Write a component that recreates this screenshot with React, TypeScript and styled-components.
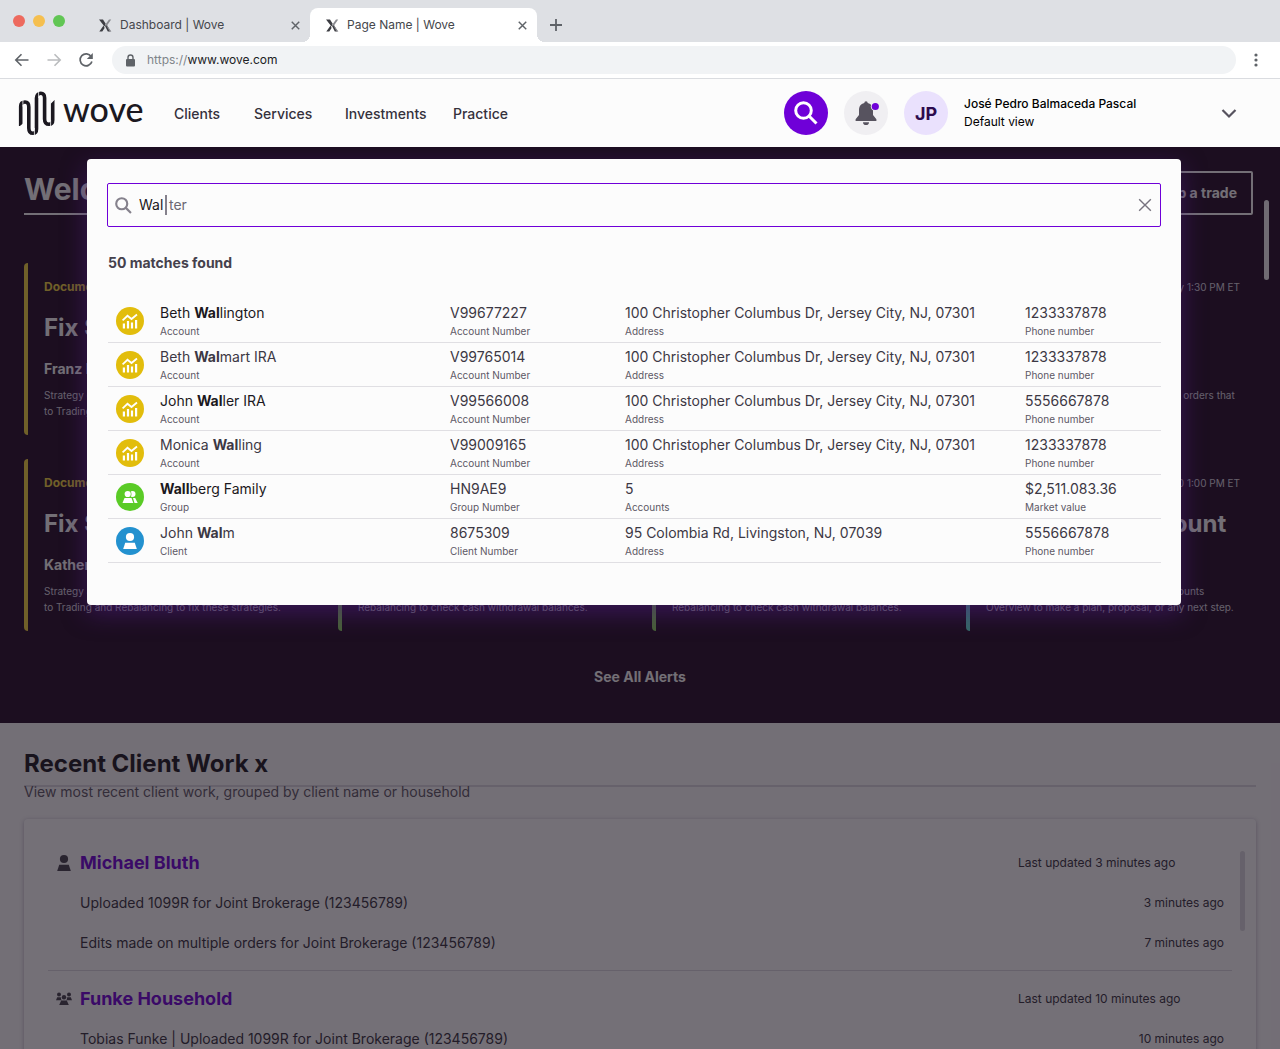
import React from "react";
import styled, { createGlobalStyle } from "styled-components";

const GlobalStyle = createGlobalStyle`
  * { box-sizing: border-box; }
  body {
    margin: 0;
    font-family: Inter, "Liberation Sans", sans-serif;
    color: #1b1820;
    background: #fcfcfc;
  }
  button, input { font: inherit; color: inherit; }
  button { border: 0; padding: 0; background: none; cursor: pointer; }
  a { color: inherit; text-decoration: none; }
  h1, h2, h3, p { margin: 0; }
  svg { display: block; flex: none; }
`;

const Window = styled.div`
  display: flex;
  flex-direction: column;
  height: 100vh;
  overflow: hidden;
`;

/* ---------- browser chrome ---------- */

const TabStrip = styled.div`
  display: flex;
  align-items: flex-end;
  height: 42px;
  padding-left: 13px;
  background: #dee0e4;
`;

const Lights = styled.div`
  display: flex;
  gap: 8px;
  align-self: center;
  margin-right: 18px;
`;

const Light = styled.span<{ $color: string }>`
  width: 12px;
  height: 12px;
  border-radius: 50%;
  background: ${(p) => p.$color};
`;

const Tab = styled.div<{ $active?: boolean }>`
  position: relative;
  display: flex;
  align-items: center;
  gap: 8px;
  width: 227px;
  height: 34px;
  padding: 0 10px 0 16px;
  border-radius: 8px 8px 0 0;
  font-size: 12px;
  line-height: 16px;
  color: #45474c;
  background: ${(p) => (p.$active ? "#fff" : "transparent")};

  &::before,
  &::after {
    content: ${(p) => (p.$active ? '""' : "none")};
    position: absolute;
    bottom: 0;
    width: 8px;
    height: 8px;
  }
  &::before {
    left: -8px;
    background: radial-gradient(circle at 0 0, transparent 8px, #fff 8px);
  }
  &::after {
    right: -8px;
    background: radial-gradient(circle at 100% 0, transparent 8px, #fff 8px);
  }
`;

const TabTitle = styled.span`
  flex: 1;
`;

const NewTab = styled.button`
  height: 34px;
  margin-left: 13px;
`;

const Toolbar = styled.div`
  display: flex;
  align-items: center;
  gap: 16px;
  height: 37px;
  padding: 0 20px 0 14px;
  border-bottom: 1px solid #dadce0;
  background: #fff;
`;

const AddressBar = styled.label`
  flex: 1;
  display: flex;
  align-items: center;
  gap: 10px;
  height: 28px;
  margin-left: 2px;
  padding: 0 12px;
  border-radius: 14px;
  background: #f1f3f5;
  font-size: 12px;
  line-height: 16px;
  color: #202124;
`;

const Scheme = styled.span`
  color: #80858a;
`;

/* ---------- app header ---------- */

const Header = styled.header`
  flex: none;
  display: flex;
  align-items: center;
  height: 68px;
  padding: 0 42px 0 18px;
  background: #fcfcfc;
`;

const Logo = styled.a`
  display: flex;
  align-items: center;
  gap: 7px;
  width: 156px;
  color: #1b1820;
`;

const Wordmark = styled.span`
  padding-bottom: 8px;
  font-family: Lato, sans-serif;
  font-weight: 500;
  font-size: 34px;
  line-height: 40px;
`;

const Nav = styled.nav`
  display: grid;
  grid-template-columns: 80px 91px 108px auto;
  font-size: 14px;
  font-weight: 500;
  color: #35313c;
`;

const Account = styled.div`
  display: flex;
  align-items: center;
  gap: 16px;
  margin-left: auto;
`;

const Round = styled.button<{ $bg: string }>`
  display: flex;
  align-items: center;
  justify-content: center;
  width: 44px;
  height: 44px;
  border-radius: 50%;
  background: ${(p) => p.$bg};
  color: #2d0b4e;
  font-size: 18px;
  font-weight: 700;
`;

const Person = styled.div`
  width: 240px;
  font-size: 12px;
  line-height: 18px;
  color: #000;
`;

const PersonName = styled.div`
  font-weight: 500;
`;

/* ---------- page ---------- */

const Page = styled.main`
  position: relative;
  flex: 1;
  min-height: 0;
  overflow: hidden;
`;

const Thumb = styled.span<{ $top: number; $right: number; $color: string }>`
  position: absolute;
  top: ${(p) => p.$top}px;
  right: ${(p) => p.$right}px;
  width: 5px;
  height: 80px;
  border-radius: 3px;
  background: ${(p) => p.$color};
`;

const Hero = styled.section`
  display: flex;
  flex-direction: column;
  padding: 24px 24px 36px;
  background: #230c26;
  color: #fcfcfc;
`;

const HeroTop = styled.div`
  display: flex;
  gap: 24px;
  height: 44px;
  margin: 0 3px 48px 0;
`;

const Welcome = styled.h1`
  flex: 1;
  border-bottom: 2px solid #fcfcfc;
  font-size: 30px;
  line-height: 36px;
  font-weight: 700;
`;

const TradeButton = styled.button`
  padding: 0 14px;
  border: 2px solid #fcfcfc;
  border-radius: 2px;
  font-size: 14px;
  line-height: 16px;
  font-weight: 700;
`;

const AlertGrid = styled.div`
  display: grid;
  grid-template-columns: repeat(4, 1fr);
  gap: 24px;
`;

const Alert = styled.article<{ $color: string }>`
  display: flex;
  flex-direction: column;
  min-height: 172px;
  padding: 16px;
  border-left: 4px solid ${(p) => p.$color};
  border-radius: 4px 0 0 4px;
  white-space: nowrap;
`;

const AlertHead = styled.div<{ $color: string }>`
  display: flex;
  justify-content: space-between;
  line-height: 16px;
  font-size: 12px;
  font-weight: 700;
  color: ${(p) => p.$color};
`;

const AlertTime = styled.time`
  margin-left: auto;
  font-size: 10px;
  font-weight: 400;
  color: #dcd8e0;
`;

const AlertTitle = styled.h2`
  margin-top: 16px;
  font-size: 24px;
  line-height: 34px;
  font-weight: 700;
`;

const AlertName = styled.h3`
  margin-top: 14px;
  font-size: 14px;
  line-height: 20px;
  font-weight: 700;
`;

const AlertText = styled.p`
  height: 32px;
  margin-top: auto;
  font-size: 10px;
  line-height: 16px;
  white-space: pre-line;
  color: #dcd8e0;
`;

const SeeAll = styled.a`
  align-self: center;
  margin-top: 36px;
  font-size: 14px;
  line-height: 20px;
  font-weight: 700;
`;

const Recent = styled.section`
  padding: 24px;
`;

const RecentTitle = styled.h2`
  padding-bottom: 4px;
  border-bottom: 2px solid #dcdae0;
  font-size: 24px;
  line-height: 34px;
  font-weight: 700;
`;

const RecentNote = styled.p`
  margin-bottom: 22px;
  font-size: 14px;
  line-height: 10px;
  color: #5c5865;
`;

const WorkCard = styled.div`
  position: relative;
  padding: 16px 24px;
  border-radius: 4px;
  background: #ffffff;
  box-shadow: 0 1px 4px rgba(60, 40, 90, 0.35);
`;

const Group = styled.section`
  padding: 8px 8px 7px;
  border-bottom: 1px solid #dcdae0;
`;

const WorkRow = styled.div`
  display: flex;
  align-items: center;
  height: 40px;
  font-size: 14px;
  line-height: 16px;
  color: #35313c;
`;

const Indent = styled.span`
  width: 24px;
`;

const GroupName = styled.a`
  font-size: 18px;
  line-height: 22px;
  font-weight: 700;
  color: #6f00d8;
`;

const When = styled.time<{ $wide?: boolean }>`
  width: ${(p) => (p.$wide ? "206px" : "auto")};
  margin-left: auto;
  font-size: 12px;
`;

/* ---------- search overlay ---------- */

const Overlay = styled.div`
  position: absolute;
  inset: 0;
  padding: 12px 99px 0 87px;
  background: rgba(24, 16, 28, 0.6);
`;

const Dialog = styled.div`
  padding: 24px 20px 42px;
  border-radius: 4px;
  background: #fcfcfc;
  box-shadow: 0 8px 24px rgba(84, 30, 140, 0.5);
`;

const SearchBox = styled.label`
  display: flex;
  align-items: center;
  height: 44px;
  padding: 0 8px 0 7px;
  border: 1px solid #6f00d8;
  border-radius: 2px;
  font-size: 14px;
  line-height: 16px;
`;

const SearchInput = styled.input`
  width: 26px;
  margin-left: 7px;
  padding: 0;
  border: 0;
  outline: 0;
  background: none;
`;

const Caret = styled.span`
  width: 2px;
  height: 20px;
  margin-right: 2px;
  background: #85818c;
`;

const Completion = styled.span`
  flex: 1;
  color: #6b6773;
`;

const Matches = styled.p`
  margin: 26px 0;
  padding-left: 1px;
  font-size: 14px;
  line-height: 20px;
  font-weight: 700;
  color: #45414c;
`;

const ResultsArea = styled.div`
  padding-left: 1px;
`;

const Results = styled.table`
  width: 100%;
  border-collapse: separate;
  border-spacing: 0;
  table-layout: fixed;
`;

const Cell = styled.td<{ $width?: string }>`
  width: ${(p) => p.$width || "auto"};
  height: 44px;
  padding: 1px 0 0;
  border-bottom: 1px solid #e0dfe3;
  vertical-align: middle;
`;

const IconCell = styled(Cell)`
  padding: 1px 0 0 8px;
`;

const Value = styled.div<{ $soft?: boolean }>`
  font-size: 14px;
  line-height: 20px;
  color: ${(p) => (p.$soft ? "#3c3844" : "#1b1820")};
`;

const Caption = styled.div`
  font-size: 10px;
  line-height: 16px;
  color: #5c5865;
`;

const Badge = styled.span<{ $color: string }>`
  display: flex;
  align-items: center;
  justify-content: center;
  width: 28px;
  height: 28px;
  border-radius: 50%;
  background: ${(p) => p.$color};
`;

/* ---------- drawings ---------- */

const Favicon = () => (
  <svg width="13" height="13" viewBox="0 0 13 13">
    <path d="M0 0.5h4l2.7 4.2-1.2 2.8z M0.3 12.5l4.3-6 1 2.6-2.3 3.4z M6 7l1.4-2 4.2 7.5H8.8z" fill="#3c3d42" />
    <path d="M6.6 5.2L10 .5h2.2L8 6.6l4.4 5.9H10.6z" fill="#8b8c91" />
  </svg>
);

const Cross = ({ size, color, width }: { size: number; color: string; width: number }) => (
  <svg width={size} height={size} viewBox="0 0 12 12" fill="none" stroke={color} strokeWidth={width}>
    <path d="M1 1l10 10M11 1L1 11" />
  </svg>
);

const WoveMark = () => (
  <svg width="38" height="46" viewBox="0 0 38 46" fill="none">
    <path
      d="M2.7 36V16.5C2.7 13 5 12 7 12C9.8 12 10.8 14 10.8 17V38C10.8 41.5 12.5 43.3 15 43.3C17.5 43.3 18.5 41.5 18.5 39V8C18.5 5 20.5 3.3 22.8 3.3C25.5 3.3 26.6 5 26.6 8V29C26.6 32.5 28.5 34.3 31 34.3C33.5 34.3 34.7 32.5 34.7 30V10"
      stroke="#1b1820"
      strokeWidth="3.6"
    />
    <path
      d="M4.9 10v6.5M16.4 45.5V38M20.6 1.5V8M32.6 36.5V30"
      stroke="#fcfcfc"
      strokeWidth="0.8"
    />
    <path d="M0 37.5l5-4v5zM32.5 14l5-5V8h-5z" fill="#fcfcfc" />
  </svg>
);

const Magnifier = ({ size, color, width }: { size: number; color: string; width: number }) => (
  <svg width={size} height={size} viewBox="0 0 24 24" fill="none" stroke={color} strokeWidth={width}>
    <circle cx="9.5" cy="9.5" r="7.8" />
    <path d="M15 15l7.5 7.5" />
  </svg>
);

const Bell = () => (
  <svg width="26" height="26" viewBox="0 0 26 26">
    <path
      d="M13 1.2a1.7 1.7 0 0 1 1.7 1.7c3.7.8 5.3 3.6 5.3 7.5v4.6l3.4 4.3V21H2.6V19.3L6 15v-4.6c0-3.9 1.6-6.7 5.3-7.5A1.7 1.7 0 0 1 13 1.2z"
      fill="#57535f"
    />
    <path d="M10 22.3h6a3 2.8 0 0 1-6 0z" fill="#57535f" />
    <circle cx="22.3" cy="6.5" r="4.5" fill="#f0eff2" />
    <circle cx="22.3" cy="6.5" r="3.6" fill="#6f00d8" />
  </svg>
);

const ChartGlyph = () => (
  <svg width="16" height="16" viewBox="0 0 16 16">
    <path d="M.6 7.3L5.5 2.8l4 3.2L15 1.5" fill="none" stroke="#fff" strokeWidth="1.8" />
    <path d="M.8 10.5h2.2V15.5H.8zM4.9 8h2.2v7.5H4.9zM8.9 9.5h2.2v6H8.9zM13 7h2.2v8.5H13z" fill="#fff" />
  </svg>
);

const GroupGlyph = () => (
  <svg width="16" height="14" viewBox="0 0 16 14">
    <circle cx="10.5" cy="4" r="3" fill="#fff" />
    <path d="M11 8h2.2l2.5 5H12.5z" fill="#fff" />
    <circle cx="5.7" cy="4" r="3.8" fill="#5acb26" />
    <circle cx="5.7" cy="4" r="3.1" fill="#fff" />
    <path d="M2.5 8h7l1.8 5H.5z" fill="#fff" />
  </svg>
);

const PersonGlyph = ({ color }: { color: string }) => (
  <svg width="16" height="18" viewBox="0 0 16 18" fill={color}>
    <circle cx="8" cy="5" r="4.1" />
    <path d="M3.2 10.8h9.6L14.8 17H1.2z" />
  </svg>
);

const HouseholdGlyph = () => (
  <svg width="16" height="16" viewBox="0 0 16 16" fill="#45414c">
    <circle cx="3" cy="3.5" r="2" />
    <circle cx="13" cy="3.5" r="2" />
    <circle cx="8" cy="6.3" r="2.2" />
    <path d="M1.2 6.3h3.6l.6 2.9H0zM11.2 6.3h3.6L16 9.2h-5.4zM5.2 9.5h5.6l2 4.5H3.2z" />
  </svg>
);

const Arrow = ({ color, flip }: { color: string; flip?: boolean }) => (
  <svg width="16" height="16" viewBox="0 0 16 16" fill="none" stroke={color} strokeWidth="1.6">
    <path d={flip ? "M1.5 8h12M8.5 2.3L14.2 8l-5.7 5.7" : "M14.5 8h-12M7.5 2.3L1.8 8l5.7 5.7"} />
  </svg>
);

const Reload = () => (
  <svg width="16" height="16" viewBox="0 0 16 16">
    <path d="M13.2 4.6A6 6 0 1 0 13.9 9.5" fill="none" stroke="#5f6368" strokeWidth="1.7" />
    <path d="M14.8 1v6H8.8z" fill="#5f6368" />
  </svg>
);

const Lock = () => (
  <svg width="13" height="13" viewBox="0 0 13 13">
    <rect x="2" y="5" width="9" height="7.5" rx="1" fill="#5f6368" />
    <path d="M4 5V3.5a2.5 2.5 0 0 1 5 0V5" fill="none" stroke="#5f6368" strokeWidth="1.4" />
  </svg>
);

/* ---------- data ---------- */

const GOLD = "#f5d73c";
const GREEN = "#8eda5f";
const TEAL = "#61e8d8";

type AlertData = {
  color: string;
  label?: string;
  time?: string;
  title?: string;
  name?: string;
  text?: string;
};

const alerts: AlertData[] = [
  { color: GOLD, label: "Documents", title: "Fix SMA", name: "Franz Lee", text: "Strategy drift. Go\nto Trading." },
  { color: GREEN },
  { color: GREEN },
  { color: TEAL, time: "Today 1:30 PM ET", text: "Go to Trading to review and release open orders that" },
  {
    color: GOLD,
    label: "Documents",
    title: "Fix SMA",
    name: "Katherine",
    text: "Strategy allocations are out of range. Go\nto Trading and Rebalancing to fix these strategies.",
  },
  { color: GREEN, text: "Cash is needed. Go to Trading and\nRebalancing to check cash withdrawal balances." },
  { color: GREEN, text: "Cash is needed. Go to Trading and\nRebalancing to check cash withdrawal balances." },
  {
    color: TEAL,
    time: "6/10 1:00 PM ET",
    title: "Set Up New Account",
    text: "Client opened new account. See the Accounts\nOverview to make a plan, proposal, or any next step.",
  },
];

const ADDRESS = "100 Christopher Columbus Dr, Jersey City, NJ, 07301";

type Result = {
  kind: "Account" | "Group" | "Client";
  name: [string, string, string];
  number: string;
  soft?: boolean;
  place: [string, string];
  last: [string, string];
};

const results: Result[] = [
  { kind: "Account", name: ["Beth ", "Wal", "lington"], number: "V99677227", place: [ADDRESS, "Address"], last: ["1233337878", "Phone number"] },
  { kind: "Account", name: ["Beth ", "Wal", "mart IRA"], soft: true, number: "V99765014", place: [ADDRESS, "Address"], last: ["1233337878", "Phone number"] },
  { kind: "Account", name: ["John ", "Wal", "ler IRA"], number: "V99566008", place: [ADDRESS, "Address"], last: ["5556667878", "Phone number"] },
  { kind: "Account", name: ["Monica ", "Wal", "ling"], soft: true, number: "V99009165", place: [ADDRESS, "Address"], last: ["1233337878", "Phone number"] },
  { kind: "Group", name: ["", "Wall", "berg Family"], number: "HN9AE9", place: ["5", "Accounts"], last: ["$2,511.083.36", "Market value"] },
  { kind: "Client", name: ["John ", "Wal", "m"], soft: true, number: "8675309", place: ["95 Colombia Rd, Livingston, NJ, 07039", "Address"], last: ["5556667878", "Phone number"] },
];

const badges = {
  Account: { color: "#e2bd0c", glyph: <ChartGlyph /> },
  Group: { color: "#5acb26", glyph: <GroupGlyph /> },
  Client: { color: "#2391cf", glyph: <PersonGlyph color="#fff" /> },
};

const work = [
  {
    name: "Michael Bluth",
    icon: <PersonGlyph color="#45414c" />,
    updated: "Last updated 3 minutes ago",
    items: [
      ["Uploaded 1099R for Joint Brokerage (123456789)", "3 minutes ago"],
      ["Edits made on multiple orders for Joint Brokerage (123456789)", "7 minutes ago"],
    ],
  },
  {
    name: "Funke Household",
    icon: <HouseholdGlyph />,
    updated: "Last updated 10 minutes ago",
    items: [["Tobias Funke | Uploaded 1099R for Joint Brokerage (123456789)", "10 minutes ago"]],
  },
];

export default function App() {
  return (
    <Window>
      <GlobalStyle />

      <TabStrip>
        <Lights>
          <Light $color="#ed6a5e" />
          <Light $color="#f5bf4f" />
          <Light $color="#61c654" />
        </Lights>
        <Tab>
          <Favicon />
          <TabTitle>Dashboard | Wove</TabTitle>
          <button aria-label="Close tab"><Cross size={9} color="#5f6368" width={1.9} /></button>
        </Tab>
        <Tab $active>
          <Favicon />
          <TabTitle>Page Name | Wove</TabTitle>
          <button aria-label="Close tab"><Cross size={9} color="#5f6368" width={1.9} /></button>
        </Tab>
        <NewTab aria-label="New tab">
          <svg width="12" height="12" viewBox="0 0 12 12" stroke="#5f6368" strokeWidth="1.8">
            <path d="M6 0v12M0 6h12" />
          </svg>
        </NewTab>
      </TabStrip>

      <Toolbar>
        <button aria-label="Back"><Arrow color="#5f6368" /></button>
        <button aria-label="Forward"><Arrow color="#babcbe" flip /></button>
        <button aria-label="Reload"><Reload /></button>
        <AddressBar>
          <Lock />
          <span><Scheme>https://</Scheme>www.wove.com</span>
        </AddressBar>
        <button aria-label="Browser menu">
          <svg width="8" height="16" viewBox="0 0 8 16" fill="#5f6368">
            <circle cx="4" cy="3" r="1.6" />
            <circle cx="4" cy="8" r="1.6" />
            <circle cx="4" cy="13" r="1.6" />
          </svg>
        </button>
      </Toolbar>

      <Header>
        <Logo href="#home">
          <WoveMark />
          <Wordmark>wove</Wordmark>
        </Logo>
        <Nav>
          <a href="#clients">Clients</a>
          <a href="#services">Services</a>
          <a href="#investments">Investments</a>
          <a href="#practice">Practice</a>
        </Nav>
        <Account>
          <Round $bg="#6f00d8" aria-label="Search"><Magnifier size={24} color="#fff" width={3} /></Round>
          <Round $bg="#f0eff2" aria-label="Notifications"><Bell /></Round>
          <Round $bg="#eae1fd">JP</Round>
          <Person>
            <PersonName>José Pedro Balmaceda Pascal</PersonName>
            <div>Default view</div>
          </Person>
          <button aria-label="Account menu">
            <svg width="18" height="18" viewBox="0 0 18 18" fill="none" stroke="#57535f" strokeWidth="2.2">
              <path d="M2.5 6L9 12.5 15.5 6" />
            </svg>
          </button>
        </Account>
      </Header>

      <Page>
        <Hero>
          <HeroTop>
            <Welcome>Welcome</Welcome>
            <TradeButton>Set up a trade</TradeButton>
          </HeroTop>
          <AlertGrid>
            {alerts.map((a, i) => (
              <Alert key={i} $color={a.color}>
                <AlertHead $color={a.color}>
                  {a.label}
                  {a.time && <AlertTime>{a.time}</AlertTime>}
                </AlertHead>
                {a.title && <AlertTitle>{a.title}</AlertTitle>}
                {a.name && <AlertName>{a.name}</AlertName>}
                {a.text && <AlertText>{a.text}</AlertText>}
              </Alert>
            ))}
          </AlertGrid>
          <SeeAll href="#alerts">See All Alerts</SeeAll>
        </Hero>
        <Thumb $top={53} $right={11} $color="#f4f3f6" />

        <Recent>
          <RecentTitle>Recent Client Work x</RecentTitle>
          <RecentNote>View most recent client work, grouped by client name or household</RecentNote>
          <WorkCard>
            {work.map((g) => (
              <Group key={g.name}>
                <WorkRow>
                  <Indent>{g.icon}</Indent>
                  <GroupName href="#client">{g.name}</GroupName>
                  <When $wide>{g.updated}</When>
                </WorkRow>
                {g.items.map(([text, when]) => (
                  <WorkRow key={text}>
                    <Indent />
                    <span>{text}</span>
                    <When>{when}</When>
                  </WorkRow>
                ))}
              </Group>
            ))}
            <Thumb $top={32} $right={11} $color="#dcdae0" />
          </WorkCard>
        </Recent>

        <Overlay>
          <Dialog role="dialog" aria-label="Search">
            <SearchBox>
              <Magnifier size={17} color="#85818c" width={3} />
              <SearchInput aria-label="Search" defaultValue="Wal" />
              <Caret />
              <Completion>ter</Completion>
              <button aria-label="Clear search"><Cross size={14} color="#77737f" width={1.2} /></button>
            </SearchBox>
            <Matches>50 matches found</Matches>
            <ResultsArea>
              <Results>
                <tbody>
                  {results.map((r) => (
                    <tr key={r.name.join("")}>
                      <IconCell $width="52px">
                        <Badge $color={badges[r.kind].color}>{badges[r.kind].glyph}</Badge>
                      </IconCell>
                      <Cell $width="290px">
                        <Value $soft={r.soft}>
                          {r.name[0]}
                          <b>{r.name[1]}</b>
                          {r.name[2]}
                        </Value>
                        <Caption>{r.kind}</Caption>
                      </Cell>
                      <Cell $width="175px">
                        <Value $soft>{r.number}</Value>
                        <Caption>{r.kind} Number</Caption>
                      </Cell>
                      <Cell $width="400px">
                        <Value $soft>{r.place[0]}</Value>
                        <Caption>{r.place[1]}</Caption>
                      </Cell>
                      <Cell>
                        <Value $soft>{r.last[0]}</Value>
                        <Caption>{r.last[1]}</Caption>
                      </Cell>
                    </tr>
                  ))}
                </tbody>
              </Results>
            </ResultsArea>
          </Dialog>
        </Overlay>
      </Page>
    </Window>
  );
}
